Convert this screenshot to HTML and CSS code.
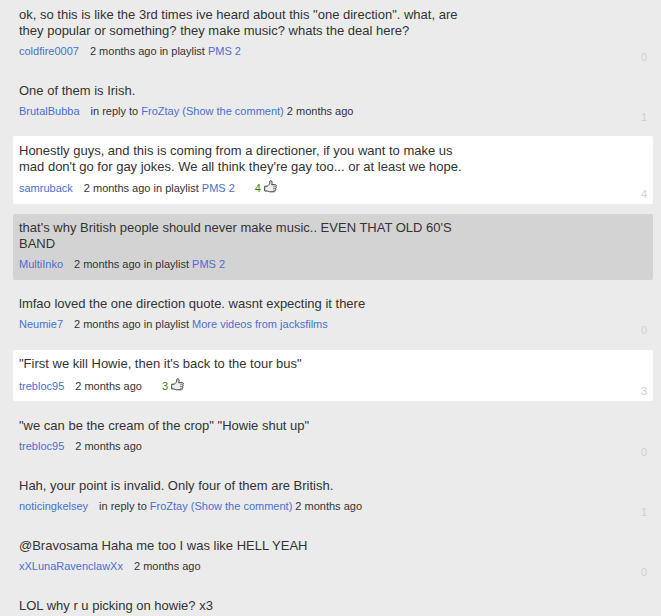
FILE: index.html
```html
<!DOCTYPE html>
<html lang="en">
<head>
<meta charset="utf-8">
<title>Comments</title>
<link rel="stylesheet" href="styles.css">
</head>
<body>
<svg class="defs" aria-hidden="true">
  <symbol id="thumb" viewBox="0 0 13 13">
    <path d="M.7 6.2H3.2C4.6 5.4 5.4 4.2 5.8 3.2V1.2C6.2.3 8 .6 8.1 2C8.2 3 7.9 3.9 7.6 4.7H11.4C12.7 4.8 12.7 6.2 11.8 6.6C12.6 7 12.4 8.2 11.5 8.5C12.2 9 11.9 10 11.1 10.3C11.4 11 11 11.8 10.2 11.8H5.5C4.5 11.8 4 11 3.2 11H.7Z" fill="#eee" stroke="#3d3d3d" stroke-width="1"/>
    <path d="M9 6.7H11.8M9 8.5H11.5M9 10.3H11.1" fill="none" stroke="#666" stroke-width=".7"/>
  </symbol>
</svg>
<ul class="comments">
  <li class="comment lead">
    <p class="text">ok, so this is like the 3rd times ive heard about this "one direction". what, are they popular or something? they make music? whats the deal here?</p>
    <div class="meta"><a class="author">coldfire0007</a><span>2 months ago in playlist <a>PMS 2</a></span></div>
    <span class="score">0</span>
  </li>
  <li class="comment lead">
    <p class="text">One of them is Irish.</p>
    <div class="meta"><a class="author">BrutalBubba</a><span>in reply to <a>FroZtay</a> <a>(Show the comment)</a> 2 months ago</span></div>
    <span class="score">1</span>
  </li>
  <li class="comment lead liked">
    <p class="text">Honestly guys, and this is coming from a directioner, if you want to make us mad don't go for gay jokes. We all think they're gay too... or at least we hope.</p>
    <div class="meta"><a class="author">samruback</a><span>2 months ago in playlist <a>PMS 2</a></span><span class="likes">4<svg class="thumb"><use href="#thumb"/></svg></span></div>
    <span class="score">4</span>
  </li>
  <li class="comment selected">
    <p class="text">that's why British people should never make music.. EVEN THAT OLD 60'S BAND</p>
    <div class="meta"><a class="author">MultiInko</a><span>2 months ago in playlist <a>PMS 2</a></span></div>
  </li>
  <li class="comment">
    <p class="text">lmfao loved the one direction quote. wasnt expecting it there</p>
    <div class="meta"><a class="author">Neumie7</a><span>2 months ago in playlist <a>More videos from jacksfilms</a></span></div>
    <span class="score">0</span>
  </li>
  <li class="comment liked short">
    <p class="text">"First we kill Howie, then it's back to the tour bus"</p>
    <div class="meta"><a class="author">trebloc95</a><span>2 months ago</span><span class="likes">3<svg class="thumb"><use href="#thumb"/></svg></span></div>
    <span class="score">3</span>
  </li>
  <li class="comment">
    <p class="text">"we can be the cream of the crop" "Howie shut up"</p>
    <div class="meta"><a class="author">trebloc95</a><span>2 months ago</span></div>
    <span class="score">0</span>
  </li>
  <li class="comment">
    <p class="text">Hah, your point is invalid. Only four of them are British.</p>
    <div class="meta"><a class="author">noticingkelsey</a><span>in reply to <a>FroZtay</a> <a>(Show the comment)</a> 2 months ago</span></div>
    <span class="score">1</span>
  </li>
  <li class="comment">
    <p class="text">@Bravosama Haha me too I was like HELL YEAH</p>
    <div class="meta"><a class="author">xXLunaRavenclawXx</a><span>2 months ago</span></div>
    <span class="score">0</span>
  </li>
  <li class="comment">
    <p class="text">LOL why r u picking on howie? x3</p>
  </li>
</ul>
</body>
</html>
```
FILE: styles.css
```css
html, body {
  height: 100%;
}
body {
  margin: 0;
  overflow: hidden;
  background: #ebebeb;
  color: #333;
  font: 13px/16px "Liberation Sans", Arial, sans-serif;
}
.defs {
  position: absolute;
  width: 0;
  height: 0;
}
.comments {
  display: flex;
  flex-direction: column;
  gap: 10px;
  margin: 0;
  padding: 0 8px 0 13px;
  list-style: none;
}
.comment {
  position: relative;
  box-sizing: border-box;
  padding: 6px 6px 9px;
  border-radius: 2px;
}
.lead {
  padding: 7px 6px 8px;
}
.text {
  width: 450px;
  margin: 0 0 5px;
}
.meta {
  display: flex;
  height: 14px;
  font-size: 11px;
  line-height: 14px;
  white-space: nowrap;
}
.author {
  margin-right: 11px;
}
a {
  color: #4a6fd0;
}
.liked {
  background: #fff;
}
.liked .meta {
  height: 16px;
  line-height: 16px;
}
.short {
  height: 51px;
  margin-bottom: 1px;
}
.short .meta {
  line-height: 18px;
}
.selected {
  background: #d3d3d3;
}
.likes {
  display: flex;
  margin-left: 20px;
  color: #2b8a1e;
}
.thumb {
  width: 13px;
  height: 13px;
  margin-left: 3px;
}
.short .thumb {
  margin-top: 1px;
}
.score {
  position: absolute;
  right: 6px;
  bottom: 3px;
  color: #cfcfcf;
  font-size: 11px;
  line-height: 14px;
}
.lead:not(.liked) .score {
  bottom: 2px;
}
```
